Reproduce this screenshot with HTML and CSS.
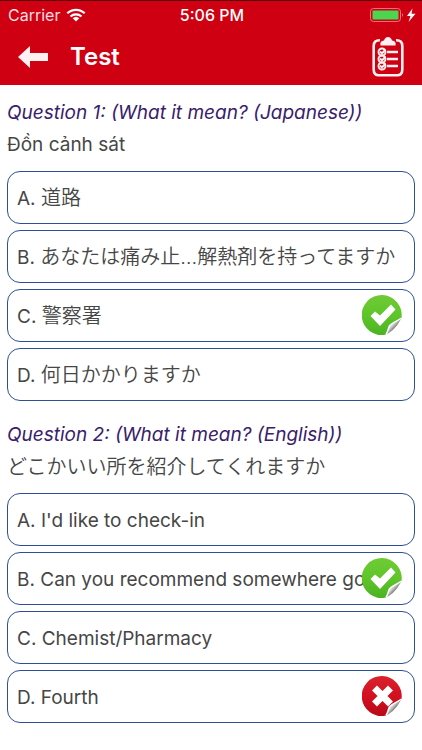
FILE: index.html
```html
<!DOCTYPE html>
<html lang="en">
<head>
    <meta charset="UTF-8">
    <meta name="viewport" content="width=device-width, initial-scale=1.0">
    <title>Test</title>
    <link rel="stylesheet" href="styles.css">
</head>
<body>
    <!-- shared icons -->
    <svg class="defs" aria-hidden="true">
        <defs>
            <linearGradient id="green" x1="0" y1="0" x2="0" y2="1">
                <stop offset="0" stop-color="#6fcb35"/>
                <stop offset="0.5" stop-color="#5fc52a"/>
                <stop offset="1" stop-color="#4cb222"/>
            </linearGradient>
            <linearGradient id="red" x1="0" y1="0" x2="0" y2="1">
                <stop offset="0" stop-color="#d9222e"/>
                <stop offset="0.5" stop-color="#d3101f"/>
                <stop offset="1" stop-color="#b90a19"/>
            </linearGradient>
            <linearGradient id="curl" x1="0" y1="0" x2="1" y2="1">
                <stop offset="0.2" stop-color="#ffffff"/>
                <stop offset="0.42" stop-color="#d8d8d8"/>
                <stop offset="0.6" stop-color="#707070"/>
            </linearGradient>
            <symbol id="peel" viewBox="0 0 40 40">
                <path d="M39.500 23C36 30 31 36 24 39.700C26 37 26 34 27.500 31C29 28 34 27 39.500 23Z" fill="url(#curl)"/>
                <path d="M24 39.500C26 36.500 26 33.500 27.500 31C29 28 34 27 39.500 23" fill="none" stroke="#fff" stroke-width="1.500"/>
            </symbol>
            <symbol id="correct" viewBox="0 0 40 40">
                <path d="M39.500 23A20 20 0 1 0 24 39.600Z" fill="url(#green)"/>
                <path d="M8.500 21L13 16.500L18 20.500L29 9.500L33.500 14.500L18 31Z" fill="#fff"/>
                <use href="#peel"/>
            </symbol>
            <symbol id="wrong" viewBox="0 0 40 40">
                <path d="M39.500 23A20 20 0 1 0 24 39.600Z" fill="url(#red)"/>
                <path d="M12.500 12L28.500 28M28.500 12L12.500 28" stroke="#fff" stroke-width="7"/>
                <use href="#peel"/>
            </symbol>
        </defs>
    </svg>

    <header>
        <div class="status">
            <div class="carrier">
                <span>Carrier</span>
                <svg width="20" height="14" viewBox="0 0 20 14">
                    <g fill="none" stroke="#fff" stroke-width="2.200">
                        <path d="M1.300 5.300A12.500 12.500 0 0 1 18.700 5.300"/>
                        <path d="M4.500 8.500A8 8 0 0 1 15.500 8.500"/>
                    </g>
                    <path d="M6.700 10.200A4.800 4.800 0 0 1 13.300 10.200L10 13.500Z" fill="#fff"/>
                </svg>
            </div>
            <time class="clock">5:06 PM</time>
            <div class="battery">
                <svg width="46" height="16" viewBox="0 0 46 16">
                    <rect x="0.500" y="1.500" width="30" height="13" rx="3" fill="none" stroke="#f0717b"/>
                    <rect x="2.500" y="3.500" width="26" height="9" rx="1" fill="#4cd54f"/>
                    <path d="M32 6Q34 8 32 10Z" fill="#f0717b"/>
                    <path d="M42.500 1.500L37 9H40.500L38.500 15L45.500 6.800H41.500Z" fill="#fff"/>
                </svg>
            </div>
        </div>
        <nav class="bar">
            <button class="icon-btn" aria-label="Back">
                <svg width="30" height="24" viewBox="0 0 30 24">
                    <path d="M0 12L12 1V8H30V16H12V23Z" fill="#fff0f1"/>
                </svg>
            </button>
            <h1>Test</h1>
            <button class="icon-btn" aria-label="Results">
                <svg width="32" height="40" viewBox="0 0 32 40">
                    <path d="M8 3.300Q1.700 3 1.700 9V32.500Q1.700 38.300 7 38.300H25Q30.300 38.300 30.300 32.500V9Q30.300 3 24 3.300" fill="none" stroke="#fff0f1" stroke-width="2.600"/>
                    <path d="M8.500 8.500Q7.500 4 12 3.500Q13 0 16 0Q19 0 20 3.500Q24.500 4 23.500 8.500Z" fill="#fff0f1"/>
                    <g fill="none" stroke="#fff0f1" stroke-width="1.900">
                        <circle cx="10" cy="15" r="3.500"/>
                        <circle cx="10" cy="22" r="3.500"/>
                        <circle cx="10" cy="29" r="3.500"/>
                        <path d="M8 14.500L10 16.500L13.500 12.500M8 21.500L10 23.500L13.500 19.500M8 28.500L10 30.500L13.500 26.500"/>
                        <path d="M15 15H26M15 22H26M15 29H26" stroke-width="2.600"/>
                    </g>
                </svg>
            </button>
        </nav>
    </header>

    <main>
        <section class="question">
            <h2>Question 1: (What it mean? (Japanese))</h2>
            <p lang="vi">Đồn cảnh sát</p>
            <div class="answers">
                <button class="answer">A. <span lang="ja">道路</span></button>
                <button class="answer">B. <span lang="ja">あなたは痛み止…解熱剤を持ってますか</span></button>
                <button class="answer">C. <span lang="ja">警察署</span>
                    <svg class="mark" role="img" aria-label="Correct"><use href="#correct"/></svg>
                </button>
                <button class="answer">D. <span lang="ja">何日かかりますか</span></button>
            </div>
        </section>

        <section class="question">
            <h2>Question 2: (What it mean? (English))</h2>
            <p lang="ja">どこかいい所を紹介してくれますか</p>
            <div class="answers">
                <button class="answer">A. I'd like to check-in</button>
                <button class="answer">B. Can you recommend somewhere go
                    <svg class="mark" role="img" aria-label="Correct"><use href="#correct"/></svg>
                </button>
                <button class="answer">C. Chemist/Pharmacy</button>
                <button class="answer">D. Fourth
                    <svg class="mark" role="img" aria-label="Wrong"><use href="#wrong"/></svg>
                </button>
            </div>
        </section>
    </main>
</body>
</html>
```
FILE: styles.css
```css
* {
    box-sizing: border-box;
}
body {
    margin: 0;
    background: #fff;
    color: #464646;
    font-family: Inter, "Noto Sans CJK JP", sans-serif;
    font-size: 19px;
}
svg {
    display: block;
}
.defs {
    position: absolute;
    width: 0;
    height: 0;
}
button {
    font: inherit;
    color: inherit;
    background: none;
    border: none;
    padding: 0;
    cursor: pointer;
}
header {
    background: #cf0012;
    border-top: 1px solid #5c0008;
    color: #fff;
}
.status {
    display: grid;
    grid-template-columns: 1fr auto 1fr;
    align-items: center;
    height: 27px;
    padding: 0 6px 0 8px;
    font-size: 16px;
}
.carrier {
    display: flex;
    align-items: center;
    gap: 6px;
    color: #ffdfe1;
}
.clock {
    font-weight: 500;
}
.battery {
    justify-self: end;
}
.bar {
    display: flex;
    align-items: center;
    height: 57px;
    padding: 0 18px;
}
.bar h1 {
    flex: 1;
    margin: 0 0 0 22px;
    font-size: 24px;
    font-weight: 600;
}
main {
    padding: 13px 7px;
}
.question {
    margin-bottom: 19px;
}
.question h2 {
    margin: 0;
    color: #38206b;
    font-size: 19px;
    font-weight: 400;
    font-style: italic;
    line-height: 30px;
}
.question p {
    margin: 0 0 9px;
    line-height: 34px;
}
.answers {
    display: flex;
    flex-direction: column;
    gap: 6px;
}
.answer {
    position: relative;
    height: 53px;
    padding: 2px 9px 0;
    border: 1px solid #2d4f96;
    border-radius: 13px;
    text-align: left;
    line-height: 24px;
    white-space: nowrap;
    overflow: hidden;
}
[lang="ja"] {
    font-size: 20px;
    font-weight: 350;
}
.mark {
    position: absolute;
    top: 5px;
    right: 12px;
    width: 40px;
    height: 40px;
}
```
